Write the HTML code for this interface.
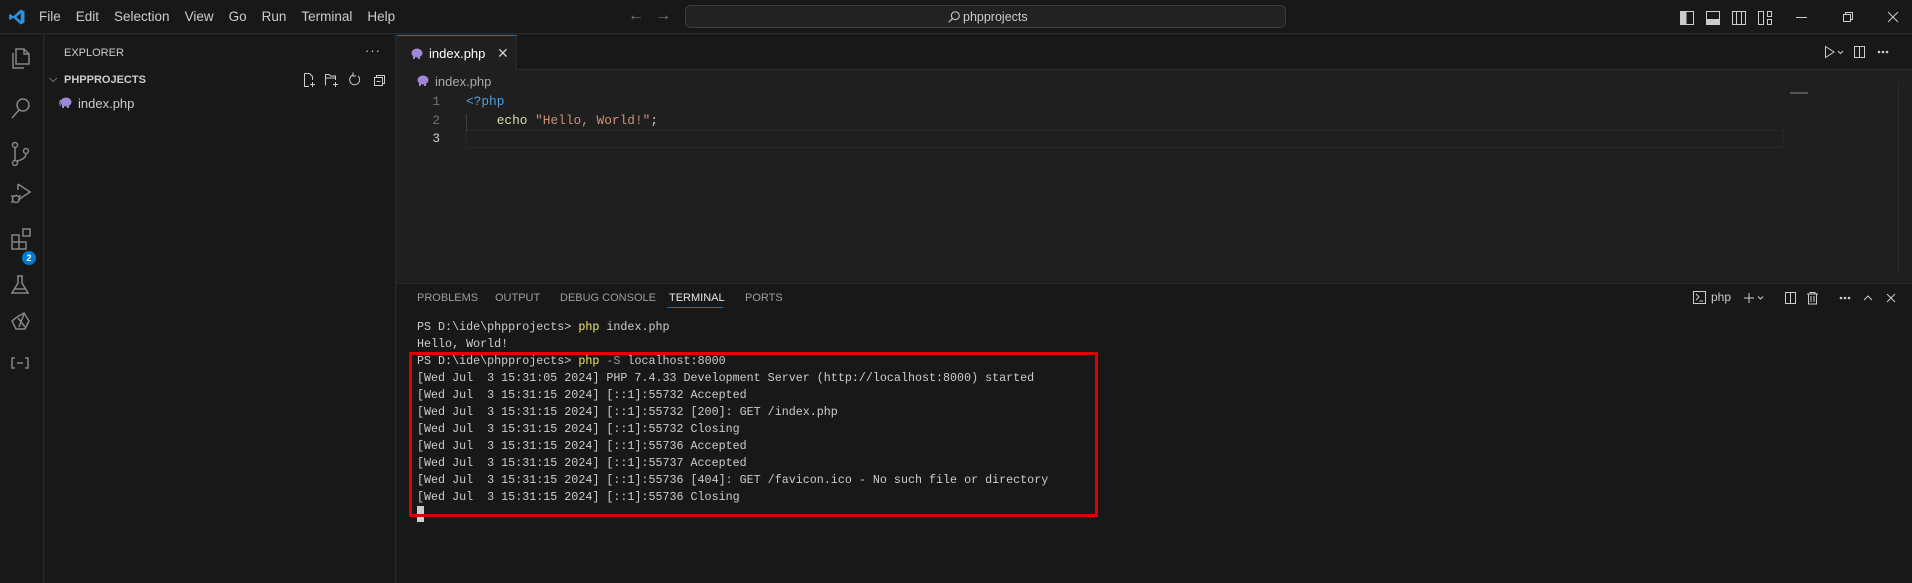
<!DOCTYPE html>
<html><head><meta charset="utf-8"><style>
*{margin:0;padding:0;box-sizing:border-box}
body{width:1912px;height:583px;background:#1f1f1f;font-family:"Liberation Sans",sans-serif;color:#ccc;position:relative;overflow:hidden}
.a{position:absolute}
.mono{font-family:"Liberation Mono",monospace}
svg{position:absolute}
</style></head><body>
<!-- title bar -->
<div class="a" style="left:0;top:0;width:1912px;height:34px;background:#181818;border-bottom:1px solid #2b2b2b"></div>
<svg style="left:8px;top:8px" width="18" height="18" viewBox="0 0 24 24"><path d="M17 2 L22 4.5 V19.5 L17 22 L7 13 L3 16 L1.5 15 V9 L3 8 L7 11 L17 2Z M17 7 L11 12 L17 17Z" fill="#2f8fdd" fill-rule="evenodd"/></svg>
<div class="a" style="left:39px;top:9px;font-size:13.5px;color:#ccc;word-spacing:0">
<span style="margin-right:15px">File</span><span style="margin-right:15px">Edit</span><span style="margin-right:15px">Selection</span><span style="margin-right:15px">View</span><span style="margin-right:15px">Go</span><span style="margin-right:15px">Run</span><span style="margin-right:15px">Terminal</span><span>Help</span></div>
<div class="a" style="left:628px;top:7px;font-size:16px;color:#777">←</div>
<div class="a" style="left:655px;top:7px;font-size:16px;color:#777">→</div>
<div class="a" style="left:685px;top:5px;width:601px;height:23px;background:#222;border:1px solid #3c3c3c;border-radius:6px"></div>
<svg style="left:947px;top:10px" width="14" height="14" viewBox="0 0 16 16"><circle cx="9.5" cy="6.5" r="4.5" stroke="#ccc" fill="none" stroke-width="1.2"/><path d="M6.3 9.7 L2 14" stroke="#ccc" stroke-width="1.3"/></svg>
<div class="a" style="left:963px;top:10px;font-size:12.5px;color:#ccc">phpprojects</div>
<!-- layout icons -->
<svg style="left:1679px;top:10px" width="100" height="16" viewBox="0 0 100 16"><g fill="none" stroke="#ccc" stroke-width="1"><rect x="1.5" y="1.5" width="13" height="13"/><rect x="27.5" y="1.5" width="13" height="13"/><rect x="53.5" y="1.5" width="13" height="13"/><line x1="57.5" y1="1.5" x2="57.5" y2="14.5"/><line x1="62.5" y1="1.5" x2="62.5" y2="14.5"/><rect x="79.5" y="1.5" width="5" height="13"/><rect x="88.5" y="1.5" width="4" height="5"/><rect x="88.5" y="9.5" width="4" height="5"/></g><rect x="1.5" y="1.5" width="6" height="13" fill="#ccc"/><rect x="27.5" y="9" width="13" height="5.5" fill="#ccc"/></svg>
<div class="a" style="left:1796px;top:17px;width:11px;height:1px;background:#ccc"></div>
<svg style="left:1841px;top:10px" width="14" height="14" viewBox="0 0 14 14"><rect x="2.5" y="4.5" width="7" height="7" fill="none" stroke="#ccc"/><path d="M4.5 4.5 V2.5 H11.5 V9.5 H9.5" fill="none" stroke="#ccc"/></svg>
<svg style="left:1886px;top:10px" width="14" height="14" viewBox="0 0 14 14"><path d="M2 2 L12 12 M12 2 L2 12" stroke="#ccc"/></svg>
<!-- activity bar -->
<div class="a" style="left:0;top:35px;width:44px;height:548px;background:#181818;border-right:1px solid #2b2b2b"></div>
<svg style="left:9px;top:45px" width="26" height="340" viewBox="0 0 26 340" fill="none" stroke="#868686" stroke-width="1.5">
<path d="M7 4 H15 L20 9 V19 H7Z M15 4 V9 H20 M4 8 V23 H15"/>
<circle cx="14" cy="60" r="6"/><path d="M10 65 L3 73"/>
<circle cx="6" cy="100" r="2.5"/><circle cx="6" cy="118" r="2.5"/><circle cx="17" cy="106" r="2.5"/><path d="M6 102.5 V115.5 M17 108.5 Q17 114 8 116"/>
<path d="M9 139 L21 147 L9 155 M9 139 V145"/><circle cx="7" cy="154" r="3.5"/><path d="M2 151 H4 M2 157 H4 M10 151 H12"/>
<path d="M3 190 H10 V197 H3Z M3 197 H10 V204 H3Z M10 197 H17 V204 H10Z M14 184 H21 V191 H14Z"/>
<path d="M9 231 V238 L3 248 H19 L13 238 V231 M8 231 H14 M5 244 H17"/>
<path d="M8 272 L15 268 L20 276 L16 284 L7 284 L3 276Z M9 273 L16 282 M15 269 L10 282"/>
<path d="M6 313 H3 V323 H6 M16 313 H19 V323 H16 M8 318 H14"/>
</svg>
<div class="a" style="left:22px;top:251px;width:14px;height:14px;border-radius:7px;background:#0078d4;color:#fff;font-size:9px;text-align:center;line-height:14px;font-weight:bold">2</div>
<!-- sidebar -->
<div class="a" style="left:45px;top:35px;width:351px;height:548px;background:#181818;border-right:1px solid #2b2b2b"></div>
<div class="a" style="left:64px;top:47px;font-size:11px;color:#ccc">EXPLORER</div>
<div class="a" style="left:365px;top:43px;font-size:13px;color:#ccc;letter-spacing:1px">···</div>
<div class="a" style="left:49px;top:73px;font-size:11px;color:#ccc">⌵</div>
<div class="a" style="left:64px;top:74px;font-size:11px;font-weight:bold;color:#ccc">PHPPROJECTS</div>
<svg style="left:302px;top:72px" width="90" height="16" viewBox="0 0 90 16" fill="none" stroke="#ccc" stroke-width="1"><path d="M2.5 1.5 H7.5 L10.5 4.5 V8 M7 14.5 H2.5 V1.5 M10.5 10 V15 M8 12.5 H13"/><path d="M23.5 13.5 V2.5 H27 L28.5 4 H33.5 V8 M23.5 6 H33 M33.5 10 V15 M31 12.5 H36"/><path d="M56 4 A5 5 0 1 1 51 3 M51 0.5 V4 H54"/><rect x="72.5" y="5.5" width="8" height="8"/><path d="M74.5 5.5 V3.5 H82.5 V11.5 H80.5 M74.5 9.5 H78.5"/></svg>
<svg style="left:59px;top:97px" width="13" height="11" viewBox="0 0 13 11"><ellipse cx="7" cy="5" rx="5.5" ry="4.5" fill="#9f86d6"/><rect x="3" y="7" width="2" height="4" fill="#9f86d6"/><rect x="8" y="7" width="2" height="4" fill="#9f86d6"/><path d="M1.5 3 Q0 6 1.5 9" stroke="#9f86d6" fill="none"/></svg>
<div class="a" style="left:78px;top:96px;font-size:13px;color:#ccc">index.php</div>
<!-- editor tabs -->
<div class="a" style="left:397px;top:35px;width:1515px;height:35px;background:#181818;border-bottom:1px solid #2b2b2b"></div>
<div class="a" style="left:397px;top:35px;width:120px;height:35px;background:#1f1f1f;border-top:1px solid #0078d4;border-right:1px solid #2b2b2b"></div>
<svg style="left:410px;top:48px" width="13" height="11" viewBox="0 0 13 11"><ellipse cx="7" cy="5" rx="5.5" ry="4.5" fill="#9f86d6"/><rect x="3" y="7" width="2" height="4" fill="#9f86d6"/><rect x="8" y="7" width="2" height="4" fill="#9f86d6"/></svg>
<div class="a" style="left:429px;top:46px;font-size:13px;color:#fff">index.php</div>
<div class="a" style="left:497px;top:45px;font-size:14px;color:#ccc">✕</div>
<svg style="left:1823px;top:45px" width="90" height="14" viewBox="0 0 90 14" fill="none" stroke="#ccc"><path d="M2.5 1.5 L11 7 L2.5 12.5Z"/><path d="M15 6 L17.5 8.5 L20 6"/><rect x="31.5" y="1.5" width="10" height="11"/><line x1="36.5" y1="1.5" x2="36.5" y2="12.5"/><circle cx="56" cy="7" r=".8" fill="#ccc"/><circle cx="60" cy="7" r=".8" fill="#ccc"/><circle cx="64" cy="7" r=".8" fill="#ccc"/></svg>
<!-- breadcrumb -->
<svg style="left:416px;top:75px" width="13" height="11" viewBox="0 0 13 11"><ellipse cx="7" cy="5" rx="5.5" ry="4.5" fill="#9f86d6"/><rect x="3" y="7" width="2" height="4" fill="#9f86d6"/><rect x="8" y="7" width="2" height="4" fill="#9f86d6"/></svg>
<div class="a" style="left:435px;top:74px;font-size:13px;color:#a9a9a9">index.php</div>
<!-- code -->
<div class="a" style="left:466px;top:130px;width:1318px;height:18px;border:1px solid #282828"></div>
<div class="a" style="left:466px;top:114px;width:1px;height:17px;background:#404040"></div>
<div class="a mono" style="left:420px;top:93px;font-size:12.8px;line-height:18.5px;color:#6e7681;width:20px;text-align:right">1<br>2<br><span style="color:#ccc">3</span></div>
<div class="a mono" style="left:466px;top:93px;font-size:12.8px;line-height:18.5px;white-space:pre;color:#ccc"><span style="color:#569cd6">&lt;?php</span>
    <span style="color:#dcdcaa">echo</span> <span style="color:#ce9178">"Hello, World!"</span>;</div>
<div class="a" style="left:1898px;top:84px;width:14px;height:190px;border-left:1px solid #2b2b2b"></div>
<div class="a" style="left:1790px;top:92px;width:18px;height:2px;background:#555"></div>
<!-- panel -->
<div class="a" style="left:397px;top:283px;width:1515px;height:300px;background:#181818;border-top:1px solid #2b2b2b"></div>
<div class="a" style="left:417px;top:292px;font-size:11px;color:#9d9d9d;white-space:pre;word-spacing:0">PROBLEMS</div>
<div class="a" style="left:495px;top:292px;font-size:11px;color:#9d9d9d">OUTPUT</div>
<div class="a" style="left:560px;top:292px;font-size:11px;color:#9d9d9d">DEBUG CONSOLE</div>
<div class="a" style="left:669px;top:292px;font-size:11px;color:#e7e7e7">TERMINAL</div>
<div class="a" style="left:667px;top:307px;width:56px;height:1px;background:#0078d4"></div>
<div class="a" style="left:745px;top:292px;font-size:11px;color:#9d9d9d">PORTS</div>
<svg style="left:1692px;top:290px" width="215" height="16" viewBox="0 0 215 16" fill="none" stroke="#ccc"><rect x="1.5" y="1.5" width="12" height="12"/><path d="M4 4 L7 7 L4 10 M7.5 11 H11"/><path d="M52 8 H62 M57 3 V13"/><path d="M66 6.5 L68.5 9 L71 6.5"/><rect x="93.5" y="2.5" width="10" height="11"/><line x1="98.5" y1="2.5" x2="98.5" y2="13.5"/><path d="M115 4 H126 M118 4 V2.5 H123 V4 M116.5 4 V14 H124.5 V4 M119 6 V12 M122 6 V12"/><circle cx="149" cy="8" r=".8" fill="#ccc"/><circle cx="153" cy="8" r=".8" fill="#ccc"/><circle cx="157" cy="8" r=".8" fill="#ccc"/><path d="M172 10 L176 6 L180 10"/><path d="M195 4 L203 12 M203 4 L195 12"/></svg>
<div class="a" style="left:1711px;top:290px;font-size:12px;color:#ccc">php</div>
<!-- terminal -->
<div class="a mono" style="left:417px;top:319px;font-size:11.7px;line-height:17px;white-space:pre;color:#cccccc">PS D:\ide\phpprojects&gt; <span style="color:#f0e86a">php</span> index.php
Hello, World!
PS D:\ide\phpprojects&gt; <span style="color:#f0e86a">php</span> <span style="color:#999">-S</span> localhost:8000
[Wed Jul  3 15:31:05 2024] PHP 7.4.33 Development Server (http://localhost:8000) started
[Wed Jul  3 15:31:15 2024] [::1]:55732 Accepted
[Wed Jul  3 15:31:15 2024] [::1]:55732 [200]: GET /index.php
[Wed Jul  3 15:31:15 2024] [::1]:55732 Closing
[Wed Jul  3 15:31:15 2024] [::1]:55736 Accepted
[Wed Jul  3 15:31:15 2024] [::1]:55737 Accepted
[Wed Jul  3 15:31:15 2024] [::1]:55736 [404]: GET /favicon.ico - No such file or directory
[Wed Jul  3 15:31:15 2024] [::1]:55736 Closing</div>
<div class="a" style="left:417px;top:506px;width:7px;height:16px;background:#ccc"></div>
<div class="a" style="left:409px;top:352px;width:689px;height:165px;border:3px solid #e00000"></div>
</body></html>
